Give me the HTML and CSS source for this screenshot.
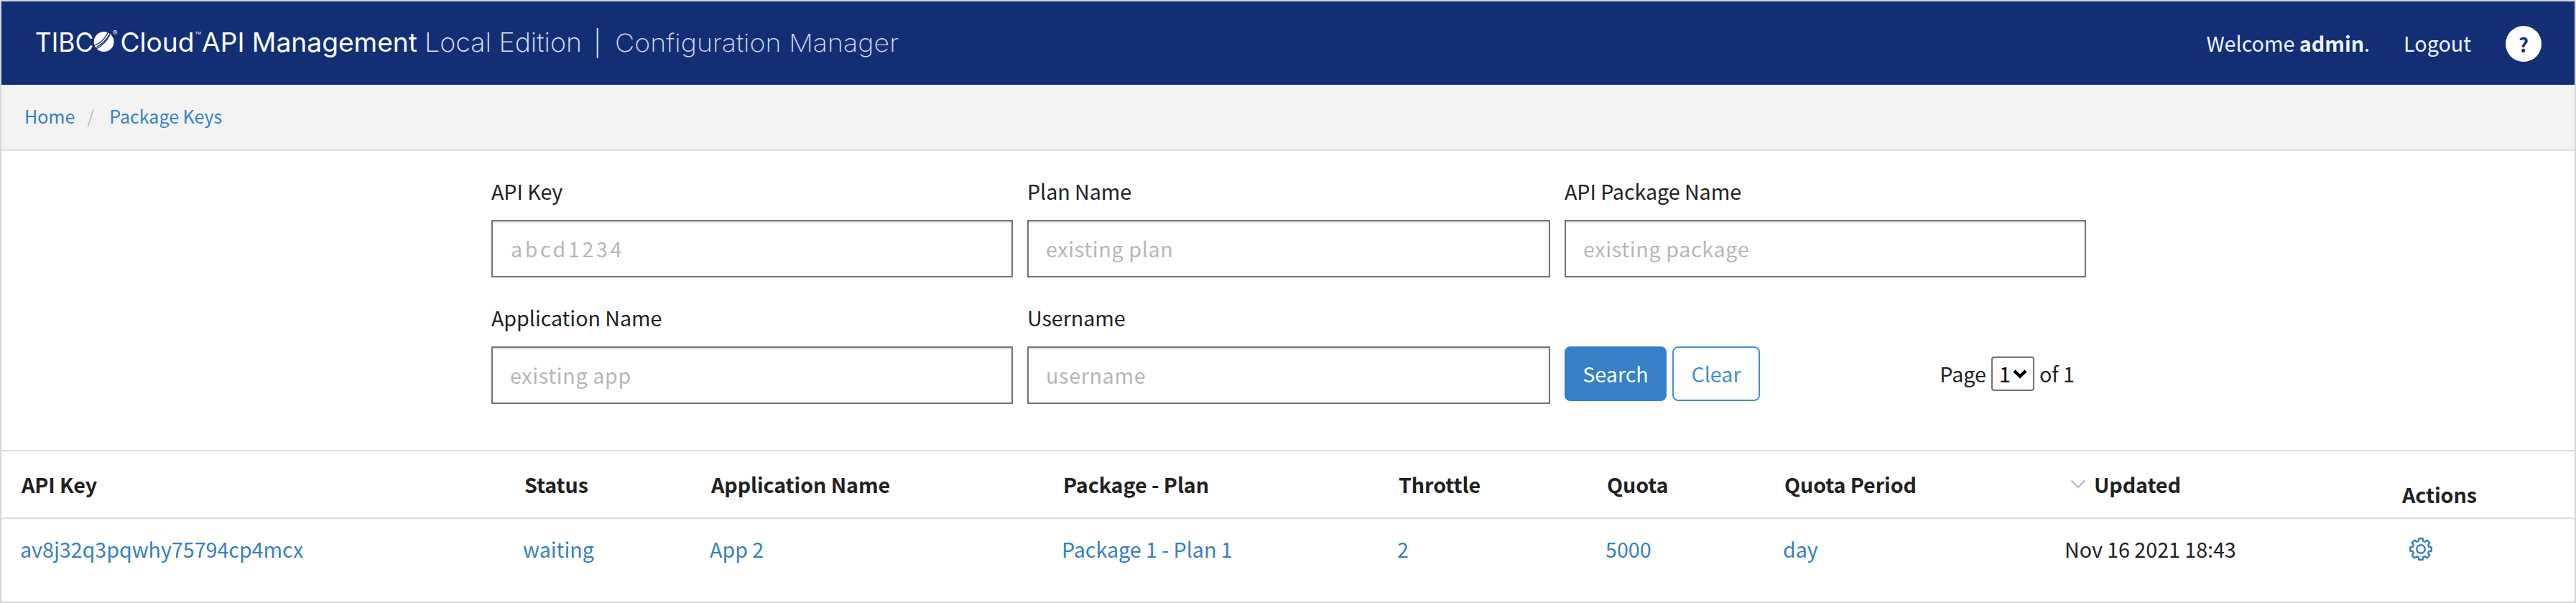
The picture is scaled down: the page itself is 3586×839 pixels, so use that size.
FILE: index.html
```html
<!DOCTYPE html>
<html lang="en">
<head>
<meta charset="utf-8">
<title>Package Keys</title>
<link rel="stylesheet" href="styles.css">
</head>
<body class="frame">
<header class="topbar">
  <svg class="brand" width="1220" height="60" viewBox="40 30 1220 60" role="img" aria-label="TIBCO Cloud API Management Local Edition">
    <g class="brand-medium">
      <text x="48.8" y="72" textLength="81.5" lengthAdjust="spacingAndGlyphs">TIBC</text>
      <text x="167.5" y="72" textLength="103" lengthAdjust="spacingAndGlyphs">Cloud</text>
      <text x="281" y="72" textLength="300" lengthAdjust="spacingAndGlyphs">API Management</text>
    </g>
    <circle cx="144.6" cy="58.2" r="13.9" fill="#fff"/>
    <g fill="none" stroke="#122f76" stroke-width="1.3">
      <path d="M131 63.5Q145 58 150.5 44.5"/>
      <path d="M132 67.2Q147 59 153.5 46"/>
      <path d="M133.5 68.5Q147 61 152.5 49"/>
    </g>
    <text class="brand-mark" x="157.3" y="48.6">®</text>
    <text class="brand-tm" x="271.5" y="47.6">TM</text>
    <text class="brand-light" x="591" y="72" textLength="219" lengthAdjust="spacingAndGlyphs">Local Edition</text>
    <rect x="830.7" y="39" width="2" height="42" fill="#dfe3ee"/>
    <text class="brand-thin" x="856" y="72" textLength="395" lengthAdjust="spacingAndGlyphs">Configuration Manager</text>
  </svg>
  <nav class="account">
    <span class="welcome">Welcome <b>admin</b>.</span>
    <a class="logout">Logout</a>
    <a class="help">?</a>
  </nav>
</header>
<nav class="crumbs"><a>Home</a><span class="slash">/</span><a>Package Keys</a></nav>
<form class="filters">
  <label class="field"><span>API Key</span><input class="wide" placeholder="abcd1234"></label>
  <label class="field"><span>Plan Name</span><input placeholder="existing plan"></label>
  <label class="field"><span>API Package Name</span><input placeholder="existing package"></label>
  <label class="field"><span>Application Name</span><input placeholder="existing app"></label>
  <label class="field"><span>Username</span><input placeholder="username"></label>
  <div class="controls">
    <button type="button" class="btn primary">Search</button>
    <button type="button" class="btn outline">Clear</button>
    <div class="pager">
      <span>Page</span>
      <span class="select">1<svg width="20" height="14" viewBox="0 0 20 14"><path d="M2 3L10 10.6L18 3" fill="none" stroke="#000" stroke-width="4.4"/></svg></span>
      <span>of 1</span>
    </div>
  </div>
</form>
<section class="table">
  <div class="row head">
    <span>API Key</span><span>Status</span><span>Application Name</span><span>Package - Plan</span><span>Throttle</span><span>Quota</span><span>Quota Period</span>
    <span class="sorted"><svg width="22" height="14" viewBox="0 0 22 14"><path d="M1.5 1.5L11 11L20.5 1.5" fill="none" stroke="#b5b5b5" stroke-width="2"/></svg>Updated</span>
    <span class="actions">Actions</span>
  </div>
  <div class="row item">
    <a>av8j32q3pqwhy75794cp4mcx</a><a>waiting</a><a>App 2</a><a>Package 1 - Plan 1</a><a>2</a><a>5000</a><a>day</a><span>Nov 16 2021 18:43</span>
    <a class="gear"><svg width="34" height="34" viewBox="-17 -17 34 34" fill="none" stroke="#3580c6" stroke-width="2.4" stroke-linejoin="round"><circle r="5.8"/><path d="M-2.6 -14.8H2.6L3.3 -11.1L5.6 -10.2L8.7 -12.3L12.3 -8.7L10.2 -5.6L11.1 -3.3L14.8 -2.6V2.6L11.1 3.3L10.2 5.6L12.3 8.7L8.7 12.3L5.6 10.2L3.3 11.1L2.6 14.8H-2.6L-3.3 11.1L-5.6 10.2L-8.7 12.3L-12.3 8.7L-10.2 5.6L-11.1 3.3L-14.8 2.6V-2.6L-11.1 -3.3L-10.2 -5.6L-12.3 -8.7L-8.7 -12.3L-5.6 -10.2L-3.3 -11.1Z"/></svg></a>
  </div>
</section>
</body>
</html>
```
FILE: styles.css
```css
* { box-sizing: border-box; }

.frame {
  margin: 0;
  width: 3586px;
  height: 839px;
  border: 2px solid #d6d6d6;
  background: #fff;
  color: #212121;
  font: 28.7px/40px "Noto Sans CJK SC", "Noto Sans", sans-serif;
  overflow: hidden;
}

.topbar {
  display: flex;
  justify-content: space-between;
  align-items: flex-start;
  height: 116px;
  padding: 28px 46px 0 38px;
  background: #122f76;
  color: #f0f3ff;
}

.brand { display: block; fill: #fff; font-family: Inter, sans-serif; font-size: 36.3px; }
.brand-medium { font-weight: 400; }
.brand-light { font-weight: 200; fill: #e6e9f3; }
.brand-thin { font-weight: 200; font-size: 34.5px; fill: #d5daea; }
.brand-mark { font-size: 9px; }
.brand-tm { font-size: 5.4px; }

.account { display: flex; align-items: flex-start; padding-top: 6px; }
.welcome { margin: 4px 47px 0 0; }
.logout { margin: 4px 48px 0 0; }
.help {
  width: 50px;
  height: 50px;
  border-radius: 50%;
  background: #fff;
  color: #122f76;
  font-size: 27px;
  font-weight: bold;
  line-height: 51px;
  text-align: center;
}

.crumbs {
  display: flex;
  height: 92px;
  padding: 22px 32px 0;
  border-top: 1px solid #fafafa;
  border-bottom: 2px solid #ddd;
  background: #f3f3f3;
  color: #3580c6;
  font-size: 25px;
}
.slash { width: 48px; padding-left: 17px; color: #bbb; }

.filters {
  display: grid;
  grid-template-columns: 726px 728px 726px;
  column-gap: 20px;
  padding: 0 0 64px 682px;
  border-bottom: 2px solid #ddd;
}
.field { display: flex; flex-direction: column; gap: 20px; padding-top: 36px; letter-spacing: -0.07px; }
.field input {
  width: 100%;
  height: 80px;
  padding: 0 24px 2px;
  border: 2px solid #747474;
  border-radius: 0;
  background: #fff;
  box-shadow: inset 0 2px 2px #ddd;
  font: inherit;
  letter-spacing: 0.65px;
}
.field .wide { letter-spacing: 3.6px; padding-left: 25px; }
.field input::placeholder { color: #b7b7b7; opacity: 1; }

.controls { display: flex; align-items: flex-start; gap: 8px; padding-top: 96px; }
.btn {
  height: 76px;
  padding: 0;
  border: 2px solid #3580c6;
  border-radius: 8px;
  font: inherit;
}
.primary { width: 142px; background: #3580c6; color: #fff; }
.outline { width: 122px; border-color: #4590ce; background: #fff; color: #4590ce; }

.pager { display: flex; align-items: center; gap: 7px; height: 76px; margin-left: auto; padding-right: 16px; }
.select {
  display: flex;
  align-items: center;
  gap: 3px;
  width: 60px;
  height: 48px;
  padding-left: 9px;
  border: 2px solid #747474;
  border-radius: 4px;
  color: #000;
}

.row {
  display: grid;
  grid-template-columns: 700px 260px 490px 467px 290px 247px 392px 468px 1fr;
}
.head { height: 94px; padding: 26px 0 0 28px; border-bottom: 2px solid #ddd; font-weight: bold; letter-spacing: -0.1px; }
.sorted { display: flex; gap: 11px; padding-left: 6px; }
.sorted svg { margin-top: 13px; }
.actions { padding-top: 14px; }

.item { padding: 22px 0 0 26px; letter-spacing: -0.04px; }
.item a { color: #3580c6; }
.item .gear { padding: 3px 0 0 11px; line-height: 0; }
```
